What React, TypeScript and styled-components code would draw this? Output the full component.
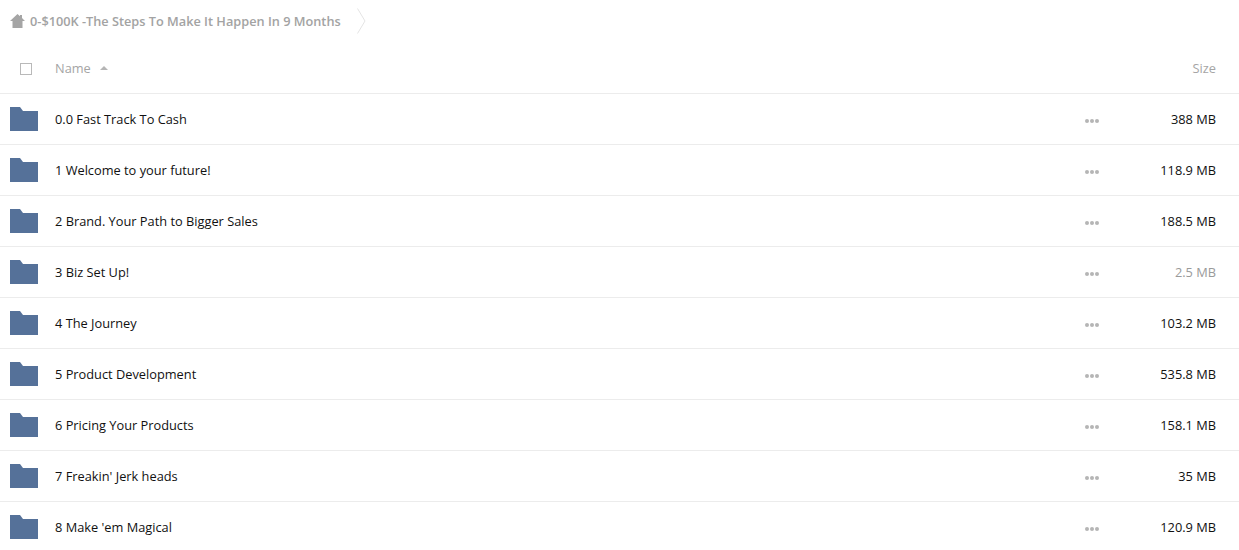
import styled, { createGlobalStyle } from "styled-components";

type Entry = { name: string; size: string; small?: boolean };

const entries: Entry[] = [
  { name: "0.0 Fast Track To Cash", size: "388 MB" },
  { name: "1 Welcome to your future!", size: "118.9 MB" },
  { name: "2 Brand. Your Path to Bigger Sales", size: "188.5 MB" },
  { name: "3 Biz Set Up!", size: "2.5 MB", small: true },
  { name: "4 The Journey", size: "103.2 MB" },
  { name: "5 Product Development", size: "535.8 MB" },
  { name: "6 Pricing Your Products", size: "158.1 MB" },
  { name: "7 Freakin' Jerk heads", size: "35 MB" },
  { name: "8 Make 'em Magical", size: "120.9 MB" },
];

const GlobalStyle = createGlobalStyle`
  html, body {
    margin: 0;
    height: 550px;
    overflow: hidden;
    background: #fff;
    font-family: "Open Sans", "Liberation Sans", sans-serif;
  }
`;

const HomeIcon = () => (
  <svg width="15" height="14" viewBox="0 0 15 14">
    <path d="M7.5 0 L10 2.2 V1 H12 V4 L15 7 H12.5 V14 H2.5 V7 H0 Z" fill="#a5a5a5" />
  </svg>
);

const FolderIcon = () => (
  <svg width="28" height="24" viewBox="0 0 28 24">
    <path d="M0 0 H10 L13 4 H28 V24 H0 Z" fill="#557199" />
  </svg>
);

const App = () => {
  return (
    <Page>
      <GlobalStyle />
      <Breadcrumb>
        <HomeIcon />
        <CrumbText>0-$100K -The Steps To Make It Happen In 9 Months</CrumbText>
        <CrumbArrow width="9" height="26" viewBox="0 0 9 26">
          <path d="M0.5 0.5 L8 13 L0.5 25.5" fill="none" stroke="#e4e4e4" />
        </CrumbArrow>
      </Breadcrumb>
      <HeaderRow>
        <Checkbox />
        <HeaderName>
          Name
          <SortArrow />
        </HeaderName>
        <HeaderSize>Size</HeaderSize>
      </HeaderRow>
      {entries.map((entry) => (
        <Row key={entry.name}>
          <FolderIcon />
          <FileName>{entry.name}</FileName>
          <Dots>
            <Dot />
            <Dot />
            <Dot />
          </Dots>
          <FileSize $small={entry.small}>{entry.size}</FileSize>
        </Row>
      ))}
    </Page>
  );
};
export default App;

const Page = styled.div`
  width: 1239px;
  height: 550px;
  overflow: hidden;
`;

const Breadcrumb = styled.div`
  height: 42px;
  display: flex;
  align-items: center;
  padding-left: 10px;
`;

const CrumbText = styled.span`
  margin-left: 5px;
  font-size: 12.74px;
  font-weight: 600;
  color: #a3a3a3;
`;

const CrumbArrow = styled.svg`
  margin-left: 16px;
`;

const HeaderRow = styled.div`
  height: 51px;
  display: flex;
  align-items: center;
  padding: 0 23px 0 20px;
  border-bottom: 1px solid #ececec;
`;

const Checkbox = styled.span`
  width: 10px;
  height: 10px;
  margin-top: 2px;
  border: 1px solid #b9b9b9;
`;

const HeaderName = styled.div`
  margin-left: 23px;
  display: flex;
  align-items: center;
  font-size: 12.8px;
  color: #a5a5a5;
`;

const SortArrow = styled.span`
  margin-left: 9px;
  width: 0;
  height: 0;
  border-left: 4px solid transparent;
  border-right: 4px solid transparent;
  border-bottom: 4px solid #b5b5b5;
`;

const HeaderSize = styled.div`
  margin-left: auto;
  font-size: 12.8px;
  color: #a5a5a5;
`;

const Row = styled.div`
  height: 50px;
  display: flex;
  align-items: center;
  padding: 0 23px 0 10px;
  border-bottom: 1px solid #ececec;
`;

const FileName = styled.div`
  margin-left: 17px;
  font-size: 12.8px;
  color: #111;
`;

const Dots = styled.div`
  margin-left: auto;
  margin-top: 4px;
  display: flex;
  gap: 1px;
`;

const Dot = styled.span`
  width: 4px;
  height: 4px;
  border-radius: 50%;
  background: #b5b5b5;
`;

const FileSize = styled.div<{ $small?: boolean }>`
  width: 117px;
  text-align: right;
  font-size: 12.8px;
  color: ${({ $small }) => ($small ? "#9a9a9a" : "#111")};
`;
